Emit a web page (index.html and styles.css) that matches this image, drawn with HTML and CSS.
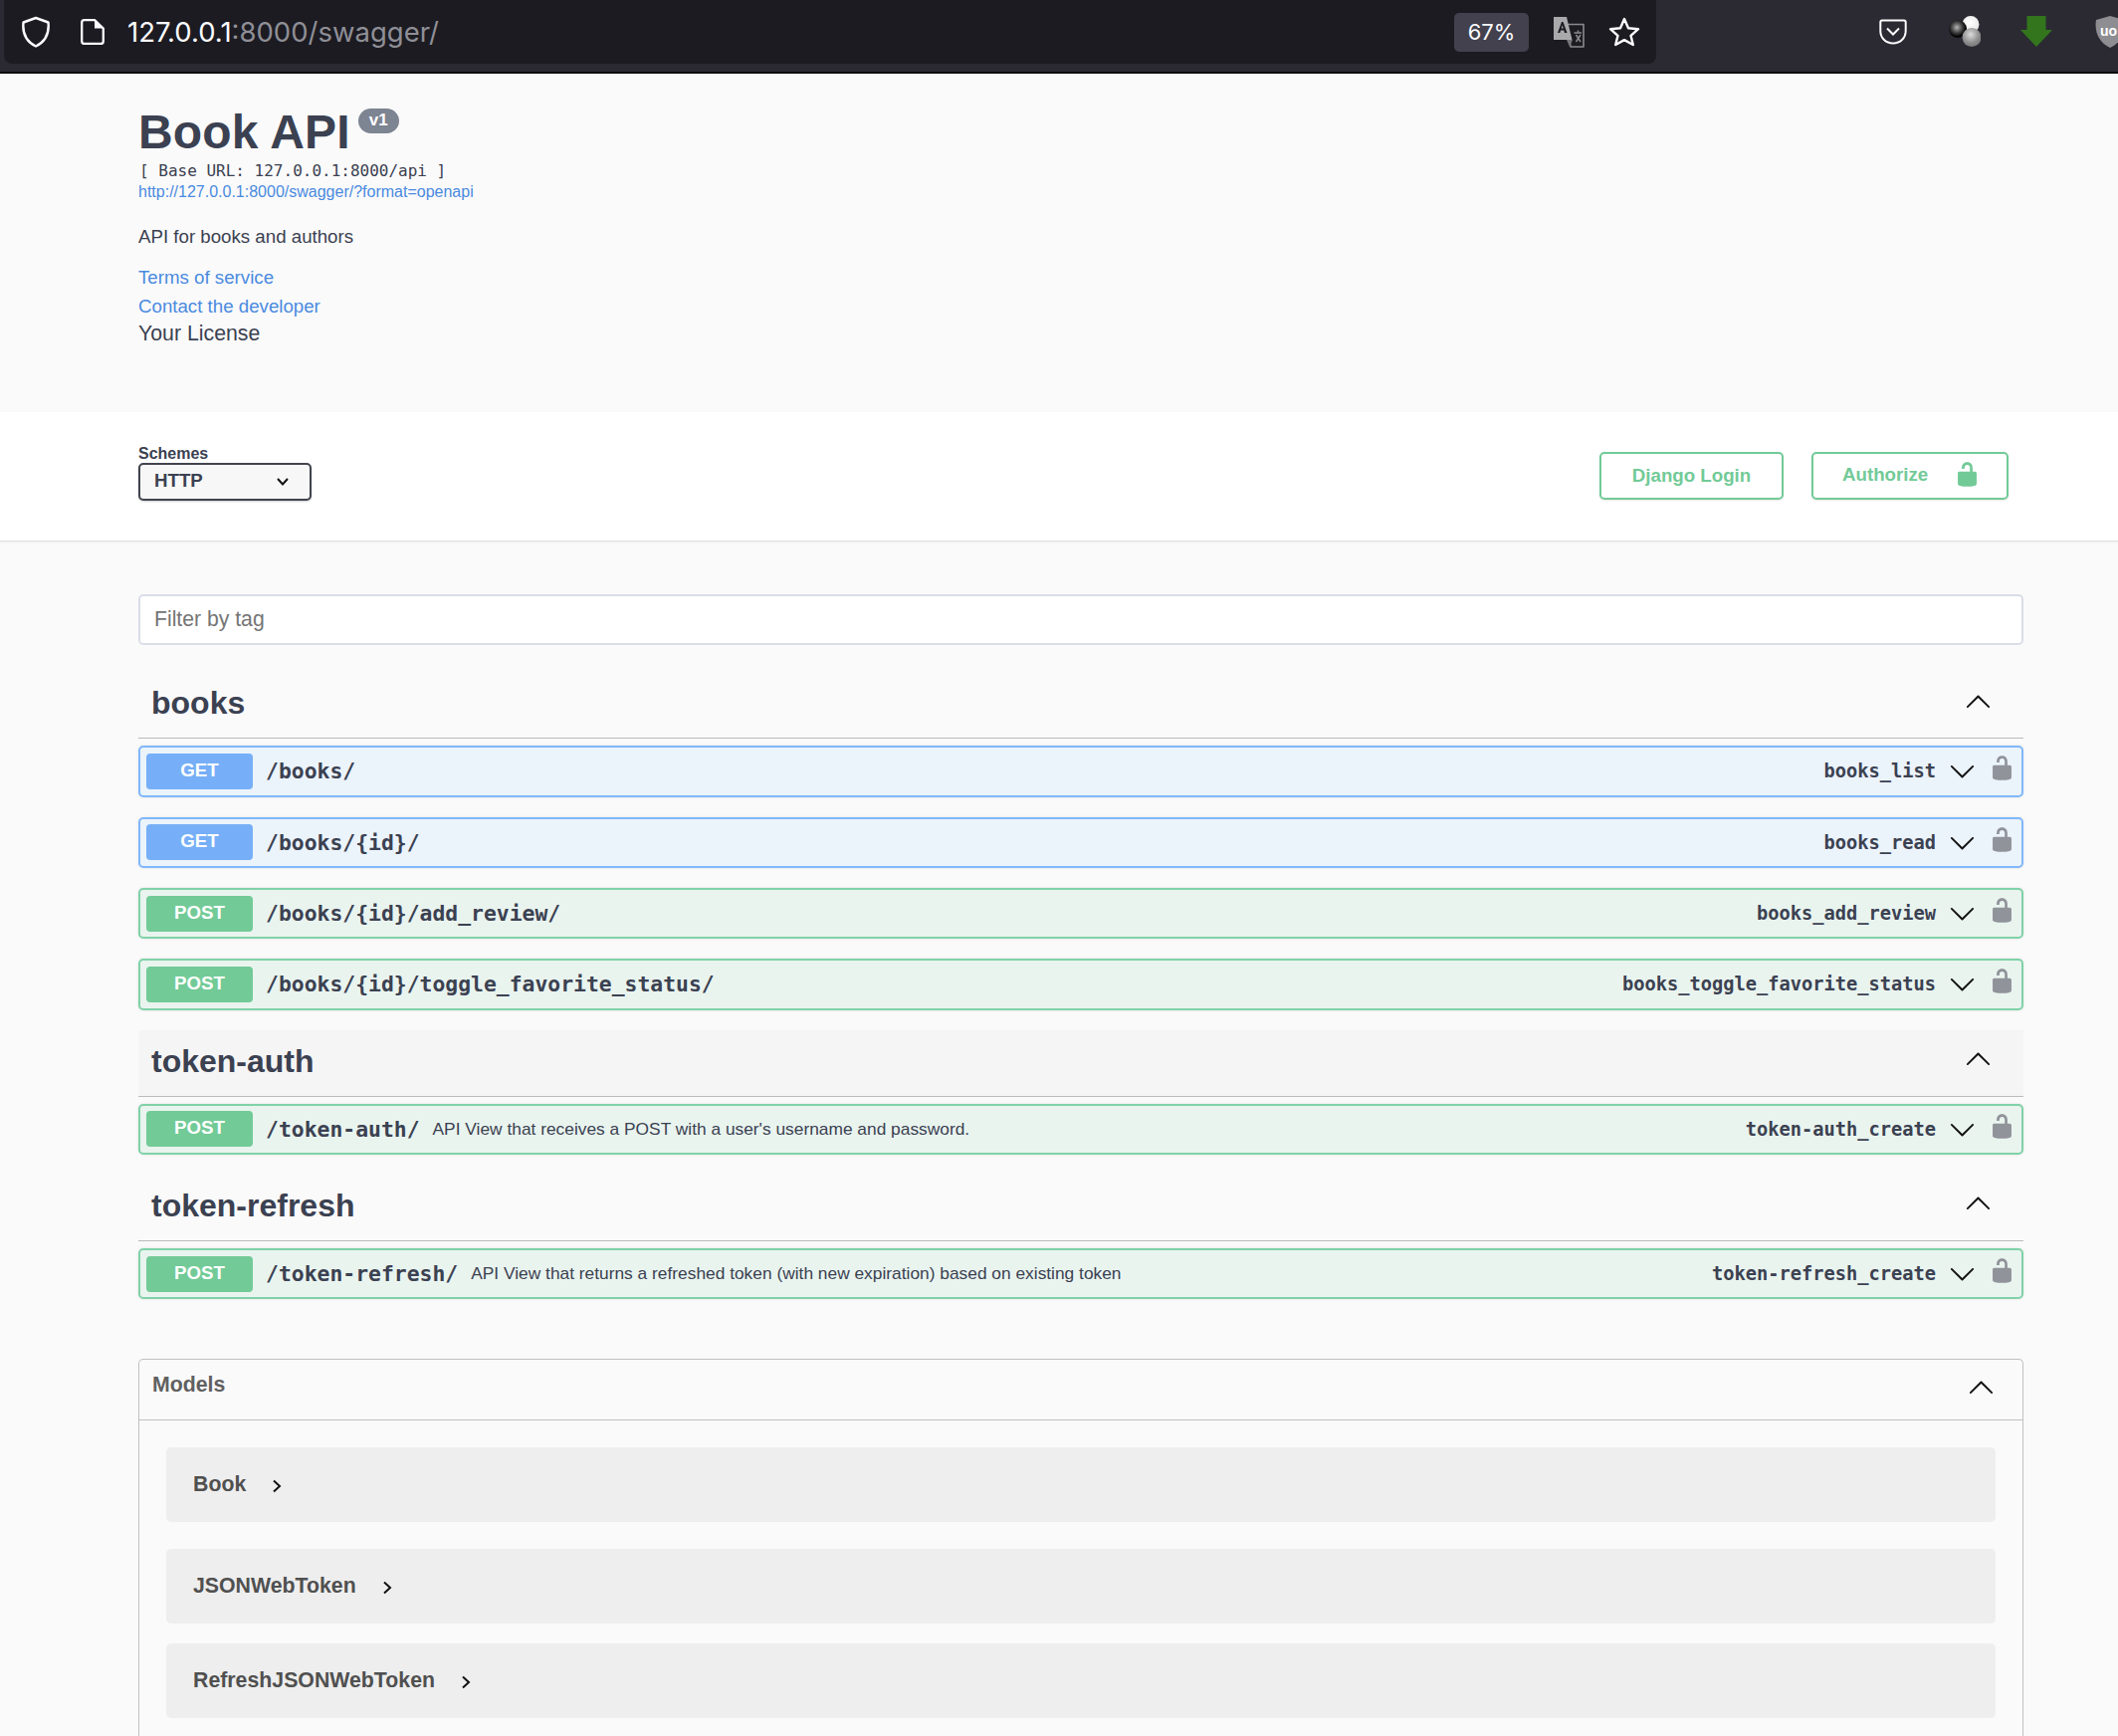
FILE: index.html
```html
<!DOCTYPE html>
<html lang="en">
<head>
<meta charset="utf-8">
<title>Book API</title>
<link rel="stylesheet" href="styles.css">
</head>
<body>
<svg class="defs" width="0" height="0" aria-hidden="true">
  <defs>
    <symbol id="lock" viewBox="0 0 20 20"><path d="M15.8 8H14V5.6C14 2.703 12.665 1 10 1 7.334 1 6 2.703 6 5.6V6h2v-.801C8 3.754 8.797 3 10 3c1.203 0 2 .754 2 2.199V8H4c-.553 0-1 .646-1 1.199V17c0 .549.428 1.139.951 1.307l1.197.387C5.672 18.861 6.55 19 7.1 19h5.8c.549 0 1.428-.139 1.951-.307l1.196-.387c.524-.167.953-.757.953-1.306V9.199C17 8.646 16.352 8 15.8 8z"/></symbol>
    <symbol id="arrow" viewBox="0 0 20 20"><path d="M17.418 6.109c.272-.268.709-.268.979 0s.271.701 0 .969l-7.908 7.83c-.27.268-.707.268-.979 0l-7.908-7.83c-.27-.268-.27-.701 0-.969.271-.268.709-.268.979 0L10 13.25l7.418-7.141z"/></symbol>
    <symbol id="small" viewBox="0 0 12 14"><path d="M3 1.5 9 7l-6 5.5" fill="none" stroke="#111" stroke-width="2"/></symbol>
    <radialGradient id="ballw" cx=".45" cy=".4" r=".7"><stop offset="0" stop-color="#fff"/><stop offset=".75" stop-color="#eaeaea"/><stop offset="1" stop-color="#b0b0b0"/></radialGradient>
    <radialGradient id="ballk" cx=".45" cy=".42" r=".62"><stop offset="0" stop-color="#b4b4b4"/><stop offset=".45" stop-color="#4a4a4a"/><stop offset=".8" stop-color="#060606"/><stop offset="1" stop-color="#000"/></radialGradient>
    <radialGradient id="ballg" cx=".45" cy=".35" r=".75"><stop offset="0" stop-color="#dcdcdc"/><stop offset=".6" stop-color="#8c8c8c"/><stop offset="1" stop-color="#707070"/></radialGradient>
  </defs>
</svg>

<header class="toolbar">
  <div class="urlbar">
    <svg class="i-shield" viewBox="0 0 30 32" width="30" height="32"><path d="M15 2 27.5 6.5C28.5 16 26 25 15 30.5 4 25 1.500 16 2.500 6.500Z" fill="none" stroke="#fbfbfe" stroke-width="2.4" stroke-linejoin="round"/></svg>
    <svg class="i-file" viewBox="0 0 24 26" width="24" height="26"><path d="M3.500 1.200H14L22.800 9.500V22.500A2.500 2.500 0 0 1 20.300 25H3.500A2.500 2.500 0 0 1 1.200 22.500V3.500A2.400 2.400 0 0 1 3.500 1.200Z" fill="none" stroke="#fbfbfe" stroke-width="2.300" stroke-linejoin="round"/><path d="M14 1.200V9.500H22.800Z" fill="#fbfbfe"/></svg>
    <div class="url"><span class="url-host">127.0.0.1</span>:8000/swagger/</div>
    <div class="zoom-level">67%</div>
    <svg class="i-translate" viewBox="0 0 32 32" width="32" height="32"><path d="M15 8.500H31V31H18Z" fill="#1c1b22" stroke="#8a8a8e" stroke-width="1.600" stroke-linejoin="round"/><path d="M1 1H14L19.500 24H1Z" fill="#a9a9ac"/><path d="M17 31 14 24H20Z" fill="#77777b"/><path d="M5 17 9 6H10.500L14.500 17H12L11.300 14.500H8L7.300 17ZM8.700 12.500H10.700L9.700 9.200Z" fill="#1c1b22"/><path d="M21.500 17H29M25.500 14.500V17M23.500 19 28 26M28 19 23.500 26" fill="none" stroke="#8a8a8e" stroke-width="1.500"/></svg>
    <svg class="i-star" viewBox="0 0 32 30" width="32" height="30"><path d="M16 2 20 11.300 30 12.200 22.500 18.800 24.800 28 16 23.100 7.200 28 9.500 18.800 2 12.200 12 11.300Z" fill="none" stroke="#fbfbfe" stroke-width="2.400" stroke-linejoin="round"/></svg>
  </div>
  <div class="extensions">
    <svg class="i-pocket" viewBox="0 0 28 26" width="28" height="26"><path d="M3 1.500H25A1.800 1.800 0 0 1 26.700 3.300V12C26.700 19.500 21 24.500 14 24.500 7 24.500 1.300 19.500 1.300 12V3.300A1.800 1.800 0 0 1 3 1.500Z" fill="none" stroke="#fbfbfe" stroke-width="2"/><path d="M8 9.500 14 15.500 20 9.500" fill="none" stroke="#fbfbfe" stroke-width="2"/></svg>
    <svg class="i-balls" viewBox="0 0 32 32" width="32" height="32"><circle cx="22" cy="8.500" r="8.500" fill="url(#ballw)"/><circle cx="9" cy="13" r="9" fill="url(#ballk)"/><circle cx="23" cy="21.500" r="9.500" fill="url(#ballg)"/></svg>
    <svg class="i-down" viewBox="0 0 32 32" width="32" height="32"><path d="M6.500 0H25.500V14H32L16 31 0 14H6.500Z" fill="#33751d"/></svg>
    <svg class="i-ubo" viewBox="0 0 32 32" width="32" height="32"><path d="M16 0 30 4C32 16 27 27 16 32 5 27 0 16 2 4Z" fill="#8d8d92"/><text class="ubo-text" x="6" y="20">uo</text></svg>
  </div>
</header>

<section class="info">
  <div class="title-row">
    <h1 class="title">Book API</h1>
    <span class="version">v1</span>
  </div>
  <div class="base-url">[ Base URL: 127.0.0.1:8000/api ]</div>
  <a class="spec-link">http://127.0.0.1:8000/swagger/?format=openapi</a>
  <p class="desc">API for books and authors</p>
  <a class="info-link terms">Terms of service</a>
  <a class="info-link contact">Contact the developer</a>
  <div class="license">Your License</div>
</section>

<section class="schemes">
  <div class="scheme-field">
    <div class="scheme-label">Schemes</div>
    <div class="select">
      <span>HTTP</span>
      <svg viewBox="0 0 14 10" width="14" height="10"><path d="M2 2 7 7.500 12 2" fill="none" stroke="#111" stroke-width="2"/></svg>
    </div>
  </div>
  <div class="auth-buttons">
    <button class="btn btn-login">Django Login</button>
    <button class="btn btn-auth"><span>Authorize</span><svg class="ic-lock" width="27" height="27"><use href="#lock"/></svg></button>
  </div>
</section>

<main class="content">
  <div class="filter">Filter by tag</div>

  <div class="tag tag-first">
    <h2>books</h2>
    <svg class="chev-up" width="27" height="27"><use href="#arrow"/></svg>
  </div>
  <div class="op get">
    <span class="method">GET</span><span class="path">/books/</span>
    <span class="opid">books_list</span>
    <svg class="chev" width="27" height="27"><use href="#arrow"/></svg>
    <svg class="op-lock" width="27" height="27"><use href="#lock"/></svg>
  </div>
  <div class="op get">
    <span class="method">GET</span><span class="path">/books/{id}/</span>
    <span class="opid">books_read</span>
    <svg class="chev" width="27" height="27"><use href="#arrow"/></svg>
    <svg class="op-lock" width="27" height="27"><use href="#lock"/></svg>
  </div>
  <div class="op post">
    <span class="method">POST</span><span class="path">/books/{id}/add_review/</span>
    <span class="opid">books_add_review</span>
    <svg class="chev" width="27" height="27"><use href="#arrow"/></svg>
    <svg class="op-lock" width="27" height="27"><use href="#lock"/></svg>
  </div>
  <div class="op post">
    <span class="method">POST</span><span class="path">/books/{id}/toggle_favorite_status/</span>
    <span class="opid">books_toggle_favorite_status</span>
    <svg class="chev" width="27" height="27"><use href="#arrow"/></svg>
    <svg class="op-lock" width="27" height="27"><use href="#lock"/></svg>
  </div>

  <div class="tag tag-hover">
    <h2>token-auth</h2>
    <svg class="chev-up" width="27" height="27"><use href="#arrow"/></svg>
  </div>
  <div class="op post">
    <span class="method">POST</span><span class="path">/token-auth/</span>
    <span class="summary">API View that receives a POST with a user's username and password.</span>
    <span class="opid">token-auth_create</span>
    <svg class="chev" width="27" height="27"><use href="#arrow"/></svg>
    <svg class="op-lock" width="27" height="27"><use href="#lock"/></svg>
  </div>

  <div class="tag">
    <h2>token-refresh</h2>
    <svg class="chev-up" width="27" height="27"><use href="#arrow"/></svg>
  </div>
  <div class="op post">
    <span class="method">POST</span><span class="path">/token-refresh/</span>
    <span class="summary">API View that returns a refreshed token (with new expiration) based on existing token</span>
    <span class="opid">token-refresh_create</span>
    <svg class="chev" width="27" height="27"><use href="#arrow"/></svg>
    <svg class="op-lock" width="27" height="27"><use href="#lock"/></svg>
  </div>

  <div class="models">
    <div class="models-head">
      <h3>Models</h3>
      <svg class="chev-up" width="27" height="27"><use href="#arrow"/></svg>
    </div>
    <div class="models-body">
      <div class="model model-wide"><span>Book</span><svg width="12" height="14"><use href="#small"/></svg></div>
      <div class="model"><span>JSONWebToken</span><svg width="12" height="14"><use href="#small"/></svg></div>
      <div class="model"><span>RefreshJSONWebToken</span><svg width="12" height="14"><use href="#small"/></svg></div>
    </div>
  </div>
</main>
</body>
</html>
```
FILE: styles.css
```css
* { box-sizing: border-box; }
html, body { margin: 0; padding: 0; }
body {
  width: 2128px;
  height: 1744px;
  overflow: hidden;
  background: #fafafa;
  color: #3b4151;
  font-family: "Liberation Sans", Arial, sans-serif;
  display: flex;
  flex-direction: column;
}
.defs { position: absolute; }

/* Browser chrome */
.toolbar {
  flex: none;
  height: 74px;
  background: #2b2a33;
  border-bottom: 2px solid #0c0c0d;
  display: flex;
  overflow: hidden;
}
.urlbar {
  width: 1660px;
  height: 64px;
  margin-left: 4px;
  background: #1c1b22;
  border-radius: 0 0 8px 8px;
  display: flex;
  align-items: center;
  padding-left: 17px;
  flex: none;
}
.i-file { margin-left: 30px; }
.url {
  margin-left: 23px;
  font-family: Inter, "Liberation Sans", sans-serif;
  font-size: 27.5px;
  color: #8f8f96;
}
.url-host { color: #fbfbfe; }
.zoom-level {
  margin-left: auto;
  width: 75px;
  height: 39px;
  line-height: 39px;
  text-align: center;
  background: #42414d;
  border-radius: 5px;
  color: #fbfbfe;
  font-family: Inter, "Liberation Sans", sans-serif;
  font-size: 22px;
}
.i-translate { margin-left: 24px; }
.i-star { margin-left: 24px; margin-right: 16px; }
.extensions {
  flex: none;
  display: flex;
  align-items: center;
  height: 64px;
  margin-left: 224px;
}
.i-balls { margin-left: 42px; }
.i-down { margin-left: 40px; }
.i-ubo { margin-left: 42px; flex: none; }
.ubo-text { font: bold 14px "Liberation Sans", sans-serif; fill: #fff; }

/* Info */
.info {
  flex: none;
  height: 340px;
  padding: 35px 0 0 139px;
}
.title-row { display: flex; align-items: flex-start; gap: 8px; height: 48px; }
.title {
  margin: 0;
  font-size: 48px;
  line-height: 48px;
  font-weight: 700;
  letter-spacing: .15px;
}
.version {
  background: #7d8492;
  color: #fff;
  font-size: 17px;
  font-weight: 700;
  height: 25px;
  line-height: 23px;
  width: 41px;
  text-align: center;
  border-radius: 13px;
}
.base-url {
  margin-top: 5px;
  padding-left: 1px;
  font-family: "DejaVu Sans Mono", monospace;
  font-size: 16px;
  line-height: 20px;
}
.spec-link {
  display: block;
  color: #4a8ae0;
  font-size: 16px;
  line-height: 20px;
  margin-top: 1px;
}
.desc {
  margin: 21.5px 0 0;
  font-size: 18.7px;
  line-height: 26px;
}
.info-link {
  display: block;
  color: #4a8ae0;
  font-size: 18.7px;
  line-height: 26px;
}
.terms { margin-top: 15px; }
.contact { margin-top: 3px; }
.license { font-size: 21.3px; line-height: 26px; margin-top: 1px; }

/* Schemes */
.schemes {
  flex: none;
  height: 130px;
  background: #fff;
  border-bottom: 1px solid #e2e2e2;
  box-shadow: 0 1px 2px rgba(0, 0, 0, .06);
  display: flex;
  justify-content: space-between;
  padding: 33px 0 0 139px;
}
.scheme-label {
  font-size: 16px;
  font-weight: 700;
  line-height: 18px;
}
.select {
  width: 174px;
  height: 38px;
  background: #f7f7f7;
  border: 2.600px solid #41444e;
  border-radius: 5px;
  box-shadow: 0 1px 2px rgba(0, 0, 0, .2);
  display: flex;
  align-items: center;
  justify-content: space-between;
  padding: 0 20px 0 14px;
  font-size: 18.7px;
  font-weight: 700;
}
.select span { margin-top: -3px; }
.auth-buttons { display: flex; gap: 28px; margin: 7px 110px 0 0; }
.btn {
  height: 48px;
  background: transparent;
  border: 2.600px solid #72ca97;
  border-radius: 5px;
  box-shadow: 0 1px 2px rgba(0, 0, 0, .1);
  color: #72ca97;
  font-family: "Liberation Sans", Arial, sans-serif;
  font-size: 18.7px;
  font-weight: 700;
  padding: 0;
}
.btn-login { width: 185px; }
.btn-auth {
  width: 198px;
  display: flex;
  align-items: center;
  padding-left: 29px;
}
.btn-auth span { margin-top: -3px; }
.ic-lock { fill: #72ca97; margin-left: 26px; margin-top: -3px; }

/* Content */
.content {
  flex: 1;
  min-height: 0;
  padding: 53px 95px 0 139px;
  display: flex;
  flex-direction: column;
}
.filter {
  flex: none;
  height: 51px;
  line-height: 46px;
  background: #fff;
  border: 2px solid #d9dde6;
  border-radius: 5px;
  padding-left: 14px;
  font-size: 21.2px;
  color: #757575;
}
.tag {
  flex: none;
  height: 67px;
  margin-bottom: 7px;
  border-bottom: 1.500px solid #bbb;
  display: flex;
  align-items: center;
  justify-content: space-between;
  padding: 0 32px 6px 13px;
}
.tag-first { margin-top: 27.3px; }
.tag-hover { background: #f5f5f5; }
.tag h2 {
  margin: 2px 0 0;
  font-size: 32px;
  line-height: 40px;
  font-weight: 700;
}
.chev-up { transform: rotate(180deg); fill: #111; }

.op {
  flex: none;
  height: 51.330px;
  margin-bottom: 20px;
  border-radius: 5px;
  border: 2px solid;
  padding: 0 6px;
  display: flex;
  align-items: center;
  box-shadow: 0 0 3px rgba(0, 0, 0, .1);
}
.get { background: #ebf3fb; border-color: #80b8fb; }
.post { background: #e9f4ef; border-color: #80d2a8; }
.method {
  flex: none;
  width: 107px;
  height: 36px;
  line-height: 33px;
  border-radius: 4px;
  color: #fff;
  text-align: center;
  font-size: 18.7px;
  font-weight: 700;
}
.get .method { background: #76aff7; }
.post .method { background: #72ca97; }
.path {
  margin-left: 13px;
  font-family: "DejaVu Sans Mono", monospace;
  font-size: 21.4px;
  font-weight: 700;
}
.summary {
  margin-left: 13px;
  font-size: 17.35px;
}
.opid {
  margin-left: auto;
  font-family: "DejaVu Sans Mono", monospace;
  font-size: 18.7px;
  font-weight: 700;
}
.chev { margin-left: 13px; fill: #111; flex: none; }
.op-lock { margin-left: 13px; fill: #90939a; margin-top: -6px; flex: none; }

.models {
  flex: 1;
  margin-top: 40px;
  border: 1.500px solid #c0c0c0;
  border-bottom: 0;
  border-radius: 5px 5px 0 0;
}
.models-head {
  height: 61px;
  border-bottom: 1.500px solid #c0c0c0;
  display: flex;
  align-items: center;
  justify-content: space-between;
  padding: 0 28px 4px 13px;
}
.models-head h3 {
  margin: -6px 0 0;
  font-size: 21.3px;
  font-weight: 700;
  color: #606060;
}
.models-body { padding: 27px 27px 0; }
.model {
  height: 75px;
  margin-bottom: 20px;
  background: #eee;
  border-radius: 5px;
  display: flex;
  align-items: center;
  padding-left: 27px;
  font-size: 21.3px;
  font-weight: 700;
  color: #505050;
}
.model-wide { margin-bottom: 27px; }
.model svg { margin-left: 25px; margin-top: 3px; }
```
